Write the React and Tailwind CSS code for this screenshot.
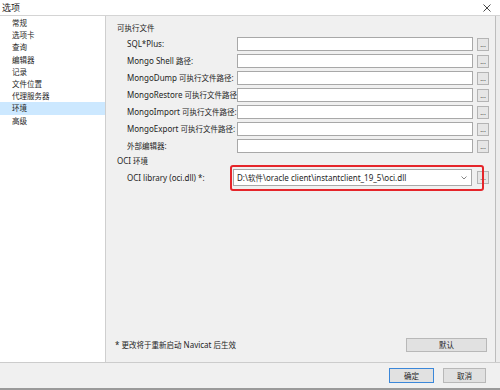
import React from "react";

const font = { fontFamily: '"Noto Sans", "Noto Sans CJK SC", sans-serif' };

function T({ children, cjk = "text-[7.5px]" }) {
  const parts = String(children).split(/([\u3000-\u9fff\uff00-\uffef]+)/);
  return (
    <>
      {parts.map((p, i) =>
        /[\u3000-\u9fff\uff00-\uffef]/.test(p) ? (
          <span key={i} className={cjk} style={{ fontFamily: '"Noto Sans CJK SC", sans-serif' }}>
            {p}
          </span>
        ) : (
          <span key={i}>{p}</span>
        )
      )}
    </>
  );
}

function Dots({ className = "" }) {
  return (
    <div className={`flex h-[13px] w-[12px] items-center justify-center border border-[#b4b4b4] bg-[#e6e6e6] text-[7px] leading-none text-[#555] ${className}`}>
      ...
    </div>
  );
}

function Row({ label }) {
  return (
    <div className="flex h-[14px] items-center">
      <div className="w-[120px] pl-[10px] whitespace-nowrap overflow-hidden text-[8px] leading-[14px] text-[#1e1e1e]">
        <T>{label}</T>
      </div>
      <div className="h-[14px] w-[236px] border border-[#a8a8a8] bg-white" />
      <Dots className="ml-[4px]" />
    </div>
  );
}

export default function App() {
  const sidebar = ["常规", "选项卡", "查询", "编辑器", "记录", "文件位置", "代理服务器", "环境", "高级"];
  const rows = [
    "SQL*Plus:",
    "Mongo Shell 路径:",
    "MongoDump 可执行文件路径:",
    "MongoRestore 可执行文件路径",
    "MongoImport 可执行文件路径:",
    "MongoExport 可执行文件路径:",
    "外部编辑器:",
  ];
  return (
    <div className="relative h-[390px] w-[500px] overflow-hidden bg-white text-[#1e1e1e]" style={font}>
      {/* title bar */}
      <div className="flex h-[16px] items-center justify-between border-b border-[#d4d4d4] bg-white pl-[2px] pr-[9px]">
        <span className="text-[9px] leading-none" style={{ fontFamily: '"Noto Sans CJK SC", sans-serif' }}>选项</span>
        <svg width="8" height="8" viewBox="0 0 8 8" className="mt-[1px]">
          <path d="M0.5 0.5 L7.5 7.5 M7.5 0.5 L0.5 7.5" stroke="#333" strokeWidth="0.9" />
        </svg>
      </div>
      {/* body */}
      <div className="flex h-[346px]">
        <div className="w-[106px] border-r border-[#cfcfcf] bg-white pt-[1px]" style={{ fontFamily: '"Noto Sans CJK SC", sans-serif' }}>
          {sidebar.map((s) => (
            <div
              key={s}
              className={`h-[12.2px] pl-[12px] text-[7.5px] leading-[12.2px] ${s === "环境" ? "bg-[#cce8ff]" : ""}`}
            >
              {s}
            </div>
          ))}
        </div>
        <div className="flex flex-1 flex-col border-r border-[#bdbdbd] bg-[#f0f0f0] pl-[11px]">
          <div className="mt-[6px] h-[12px] text-[8px] leading-[12px]">
            <T>可执行文件</T>
          </div>
          <div className="mt-[3px] flex flex-col gap-[3px]">
            {rows.map((r) => (
              <Row key={r} label={r} />
            ))}
          </div>
          <div className="mt-[2px] h-[12px] text-[8px] leading-[12px]">
            <T>OCI 环境</T>
          </div>
          <div className="relative mt-[2px] flex h-[17px] items-center">
            <div className="w-[116px] pl-[10px] text-[8px] leading-[17px] whitespace-nowrap">OCI library (oci.dll) *:</div>
            <div className="flex h-[17px] w-[239px] items-center justify-between border border-[#a8a8a8] bg-white pl-[3px] pr-[4px]">
              <span className="text-[8px] leading-none whitespace-nowrap">
                <T>D:\软件\oracle client\instantclient_19_5\oci.dll</T>
              </span>
              <svg width="6" height="4" viewBox="0 0 6 4">
                <path d="M0.5 0.5 L3 3 L5.5 0.5" stroke="#666" strokeWidth="0.8" fill="none" />
              </svg>
            </div>
            <Dots className="ml-[5px]" />
            <div className="pointer-events-none absolute left-[113px] top-[-4px] h-[26px] w-[254px] rounded-[3px] border-2 border-[#e5252a]" />
          </div>
          <div className="flex-1" />
          <div className="mb-[10px] flex items-center justify-between pr-[8px]">
            <span className="ml-[-2px] text-[8px] leading-none">
              <T>* 更改将于重新启动 Navicat 后生效</T>
            </span>
            <div className="flex h-[14px] w-[81px] items-center justify-center border border-[#b8b8b8] bg-[#e1e1e1] text-[7.5px] leading-none" style={{ fontFamily: '"Noto Sans CJK SC", sans-serif' }}>默认</div>
          </div>
        </div>
        <div className="w-[4px] bg-[#ececec]" />
      </div>
      {/* footer */}
      <div className="flex h-[26px] items-center justify-end gap-[9px] border-t border-[#cccccc] bg-[#f0f0f0] pr-[14px]" style={{ fontFamily: '"Noto Sans CJK SC", sans-serif' }}>
        <div className="flex h-[15px] w-[45px] items-center justify-center border border-[#3b87d9] bg-[#e1e1e1] text-[7.5px] leading-none">确定</div>
        <div className="flex h-[15px] w-[43px] items-center justify-center border border-[#b8b8b8] bg-[#e1e1e1] text-[7.5px] leading-none">取消</div>
      </div>
      <div className="h-[2px] bg-[#9a9a9a]" />
    </div>
  );
}
